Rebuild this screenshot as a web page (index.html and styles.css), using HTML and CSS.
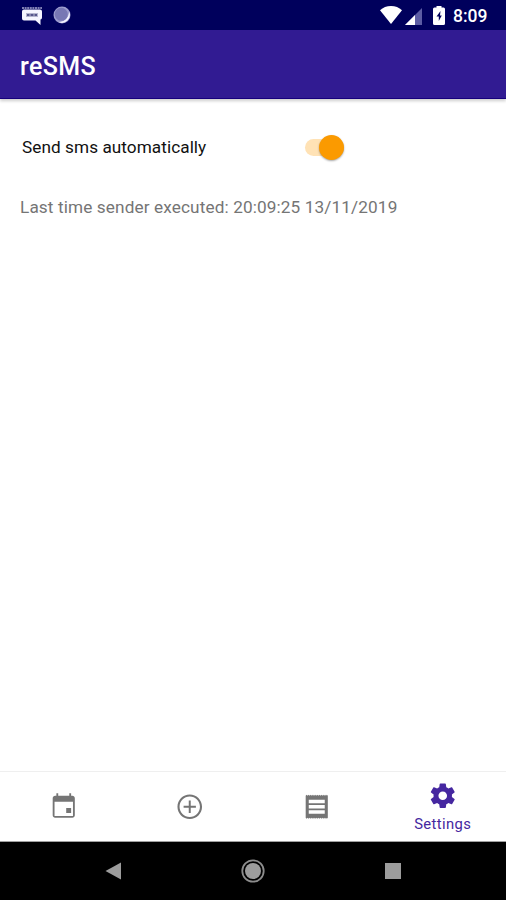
FILE: index.html
```html
<!DOCTYPE html>
<html lang="en">
<head>
    <meta charset="UTF-8">
    <meta name="viewport" content="width=device-width, initial-scale=1.0">
    <title>reSMS</title>
    <link rel="stylesheet" href="styles.css">
</head>
<body>

<div class="screen">
    <!-- Status bar -->
    <div class="status-bar">
        <svg class="sms-icon" width="22" height="20" viewBox="0 0 22 20">
            <path d="M1 2h20" stroke="#a9a9d0" stroke-width="1.400" stroke-dasharray="2 .6"/>
            <path d="M3 3.500h16q2 0 2 2v6q0 2-1.500 2V19l-5-4.500H3q-2 0-2-2v-7q0-2 2-2z" fill="#f4f4ff"/>
            <path d="M5 7h12v4H5z" fill="#b4b4d0"/>
            <path d="M6 9h2.500m1 0h3m1 0H16" stroke="#55558c" stroke-width="1.800"/>
        </svg>
        <svg class="sync-icon" width="18" height="18" viewBox="0 0 18 18">
            <circle cx="9" cy="9" r="8.500" fill="#9c9cce"/>
            <path d="M16.300 6A8 8 0 0 1 6 16.300Q15 15 16.300 6z" fill="#f4f4ff"/>
            <circle cx="8.300" cy="8.300" r="6.500" fill="#7777b4"/>
        </svg>
        <div class="status-right">
            <svg class="wifi-icon" width="22" height="18" viewBox="0 0 22 18">
                <path d="M11 18L0 4.300Q4.500 0 11 0t11 4.300z" fill="#fff"/>
            </svg>
            <svg class="signal-icon" width="17" height="17" viewBox="0 0 17 17">
                <path d="M0 17L17 0v17z" fill="#5c5ca4"/>
                <path d="M0 17L10 7v10z" fill="#fff"/>
            </svg>
            <svg class="battery-icon" width="12" height="19" viewBox="0 0 12 19">
                <path d="M3.500 0h5v1.500h2q1.500 0 1.500 1.500v14.500q0 1.500-1.500 1.500h-9Q0 19 0 17.500V3q0-1.500 1.500-1.500h2z" fill="#fff"/>
                <path d="M7.500 5L3.500 10.500h2.300V15l3-5.500H7z" fill="#00005c"/>
            </svg>
            <span class="clock">8:09</span>
        </div>
    </div>

    <!-- App bar -->
    <div class="app-bar">
        <h1>reSMS</h1>
    </div>

    <!-- Settings content -->
    <div class="content">
        <div class="setting-row">
            <span class="setting-label">Send sms automatically</span>
            <div class="switch"><div class="thumb"></div></div>
        </div>
        <p class="last-run">Last time sender executed: 20:09:25 13/11/2019</p>
    </div>

    <!-- Bottom navigation -->
    <div class="bottom-nav">
        <div class="nav-item">
            <svg viewBox="0 0 24 24"><path d="M18 13h-4v4h4v-4zM16.500 1v2h-9V1H6v2H5c-1.110 0-1.990.9-1.990 2L3 19c0 1.100.890 2 2 2h14c1.100 0 2-.9 2-2V5c0-1.100-.9-2-2-2h-1V1h-1.500zm3 18.500h-15V8h15v11.500z"/></svg>
        </div>
        <div class="nav-item">
            <svg viewBox="0 0 24 24"><path d="M12.800 7h-1.600v4.200H7v1.600h4.200V17h1.600v-4.200H17v-1.600h-4.200V7zM12 2C6.480 2 2 6.480 2 12s4.480 10 10 10 10-4.480 10-10S17.520 2 12 2zm0 18.300c-4.580 0-8.300-3.720-8.300-8.300s3.720-8.300 8.300-8.300 8.300 3.720 8.300 8.300-3.720 8.300-8.300 8.300z"/></svg>
        </div>
        <div class="nav-item">
            <svg viewBox="0 0 24 24"><path fill-rule="evenodd" d="M3 3l.75-.75.75.75.75-.75L6 3l.75-.75.75.75.75-.75L9 3l.75-.75.75.75.75-.75.75.75.75-.75.75.75.75-.75.75.75.75-.75.75.75.75-.75.75.75.75-.75.75.75.75-.75L21 3v18l-.75.75-.75-.75-.75.75L18 21l-.75.75-.75-.75-.75.75L15 21l-.75.75-.75-.75-.75.75L12 21l-.75.75-.75-.75-.75.75L9 21l-.75.75-.75-.75-.75.75L6 21l-.75.75-.75-.75-.75.75L3 21zM5.500 6.300v2.800h13V6.300zM5.500 10.600v2.800h13v-2.800zM5.500 14.900v2.800h13v-2.800z"/></svg>
        </div>
        <div class="nav-item active">
            <svg viewBox="0 0 24 24"><path d="M19.430 12.980c.04-.32.07-.64.07-.98s-.03-.66-.07-.98l2.110-1.650c.19-.15.24-.42.12-.64l-2-3.460c-.12-.22-.39-.3-.61-.22l-2.490 1c-.52-.4-1.080-.73-1.690-.98l-.38-2.650C14.460 2.180 14.250 2 14 2h-4c-.25 0-.46.18-.49.42l-.38 2.650c-.61.25-1.170.59-1.690.98l-2.490-1c-.23-.09-.49 0-.61.22l-2 3.460c-.13.22-.07.49.12.64l2.110 1.650c-.04.32-.07.65-.07.98s.03.66.07.98l-2.110 1.650c-.19.15-.24.42-.12.64l2 3.460c.12.22.39.3.61.22l2.490-1c.52.4 1.080.73 1.690.98l.38 2.650c.03.24.24.42.49.42h4c.25 0 .46-.18.49-.42l.38-2.650c.61-.25 1.170-.59 1.690-.98l2.490 1c.23.09.49 0 .61-.22l2-3.460c.12-.22.07-.49-.12-.64l-2.110-1.650zM12 15.500c-1.930 0-3.500-1.570-3.500-3.500s1.570-3.500 3.500-3.500 3.500 1.570 3.500 3.500-1.570 3.500-3.500 3.500z"/></svg>
            <span>Settings</span>
        </div>
    </div>

    <!-- System navigation -->
    <div class="system-nav">
        <svg width="24" height="24" viewBox="0 0 24 24"><path d="M4.500 12L20 3.500v17z" fill="#9c9c9c"/></svg>
        <svg width="24" height="24" viewBox="0 0 24 24">
            <circle cx="12" cy="12" r="10.700" fill="none" stroke="#8c8c8c" stroke-width="1.800"/>
            <circle cx="12" cy="12" r="8" fill="#9c9c9c"/>
        </svg>
        <svg width="24" height="24" viewBox="0 0 24 24"><path d="M4 4h16v16H4z" fill="#9c9c9c"/></svg>
    </div>
</div>

</body>
</html>
```

FILE: styles.css
```css
* {
    box-sizing: border-box;
}
body {
    margin: 0;
    font-family: Roboto, "Liberation Sans", sans-serif;
    background-color: #fff;
}
.screen {
    display: flex;
    flex-direction: column;
    width: 506px;
    height: 900px;
    overflow: hidden;
}
.status-bar {
    display: flex;
    align-items: center;
    height: 30px;
    padding: 0 19px 0 21px;
    background-color: #00005c;
}
.sms-icon {
    margin-top: 1px;
}
.sync-icon {
    margin-left: 10px;
}
.status-right {
    display: flex;
    align-items: center;
    margin-left: auto;
}
.signal-icon {
    margin: 2px 11px 0 3px;
}
.clock {
    width: 34px;
    margin-left: 8px;
    padding-top: 2px;
    font-size: 17.5px;
    font-weight: 500;
    color: #fff;
}
.app-bar {
    display: flex;
    align-items: center;
    height: 69px;
    padding: 0 20px;
    background-color: #311b92;
    border-bottom: 1px solid #16007c;
    box-shadow: 0 2px 3px rgba(0, 0, 0, 0.2);
}
.app-bar h1 {
    margin: 4px 0 0;
    font-size: 25px;
    font-weight: 500;
    letter-spacing: 0.4px;
    color: #fff;
}
.content {
    flex: 1;
    padding: 32px 20px 0;
}
.setting-row {
    display: flex;
    align-items: center;
    justify-content: space-between;
    width: 324px;
    height: 32px;
    padding-left: 2px;
}
.setting-label {
    font-size: 17.2px;
    letter-spacing: 0.06px;
    color: #111;
}
.switch {
    display: flex;
    align-items: center;
    justify-content: flex-end;
    width: 39px;
    height: 17px;
    border-radius: 9px;
    background-color: #ffe2b5;
}
.thumb {
    width: 25px;
    height: 25px;
    border-radius: 50%;
    background-color: #fb9a00;
    box-shadow: 0 1px 2px rgba(0, 0, 0, 0.35);
}
.last-run {
    margin: 34px 0 0;
    font-size: 17.2px;
    line-height: 20px;
    letter-spacing: 0.12px;
    white-space: nowrap;
    color: #757575;
}
.bottom-nav {
    display: flex;
    height: 71px;
    border-top: 1px solid #efefef;
    border-bottom: 1px solid #a0a0a0;
}
.nav-item {
    display: flex;
    flex: 1;
    flex-direction: column;
    align-items: center;
    justify-content: center;
    padding-top: 1px;
    color: #757575;
}
.nav-item svg {
    width: 29.5px;
    height: 29.5px;
    fill: currentColor;
}
.nav-item.active {
    color: #4527a0;
}
.nav-item span {
    margin-top: 4px;
    font-size: 14.8px;
    line-height: 18px;
    letter-spacing: 0.4px;
}
.system-nav {
    display: flex;
    justify-content: center;
    gap: 116px;
    height: 58px;
    padding-top: 17px;
    background-color: #000;
}
```
